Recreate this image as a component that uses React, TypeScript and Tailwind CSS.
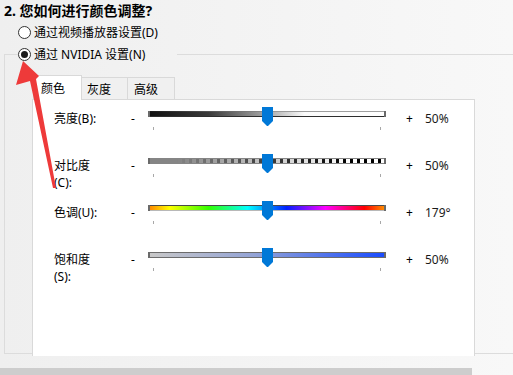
import React from "react";

type Kind = "bright" | "contrast" | "hue" | "sat";

function Track({ kind }: { kind: Kind }) {
  const id = `g-${kind}`;
  return (
    <svg width="238" height="24" viewBox="0 0 238 24" className="block">
      <defs>
        {kind === "bright" && (
          <>
            <linearGradient id={id} x1="0" x2="1" y1="0" y2="0">
              <stop offset="0" stopColor="#111" />
              <stop offset="0.25" stopColor="#3a3a3a" />
              <stop offset="0.5" stopColor="#a8a8a8" />
              <stop offset="0.66" stopColor="#fafafa" />
              <stop offset="1" stopColor="#ffffff" />
            </linearGradient>
            <linearGradient id={`${id}-t`} x1="0" x2="1" y1="0" y2="0">
              <stop offset="0" stopColor="#1a1a1a" />
              <stop offset="0.55" stopColor="#9a9a9a" />
              <stop offset="1" stopColor="#a0a0a0" />
            </linearGradient>
          </>
        )}
        {kind === "contrast" && (
          <>
            <pattern id={`${id}-p`} x="2" y="0" width="7" height="24" patternUnits="userSpaceOnUse">
              <rect x="0" y="0" width="4" height="24" fill="#ffffff" />
              <rect x="4" y="0" width="3" height="24" fill="#000000" />
            </pattern>
            <linearGradient id={`${id}-m`} x1="0" x2="1" y1="0" y2="0">
              <stop offset="0.12" stopColor="#fff" stopOpacity="0" />
              <stop offset="0.55" stopColor="#fff" stopOpacity="0.6" />
              <stop offset="0.85" stopColor="#fff" stopOpacity="1" />
            </linearGradient>
            <mask id={`${id}-mask`}>
              <rect x="0" y="0" width="238" height="24" fill={`url(#${id}-m)`} />
            </mask>
          </>
        )}
        {kind === "hue" && (
          <linearGradient id={id} x1="0" x2="1" y1="0" y2="0">
            <stop offset="0" stopColor="#ff8a00" />
            <stop offset="0.0833" stopColor="#ffff00" />
            <stop offset="0.25" stopColor="#33ff00" />
            <stop offset="0.4167" stopColor="#00ffff" />
            <stop offset="0.5833" stopColor="#0020ff" />
            <stop offset="0.75" stopColor="#ff00ff" />
            <stop offset="0.9167" stopColor="#ff0000" />
            <stop offset="1" stopColor="#ff8a00" />
          </linearGradient>
        )}
        {kind === "sat" && (
          <linearGradient id={id} x1="0" x2="1" y1="0" y2="0">
            <stop offset="0" stopColor="#c8c8c8" />
            <stop offset="0.45" stopColor="#93a3d6" />
            <stop offset="1" stopColor="#1a4cff" />
          </linearGradient>
        )}
      </defs>

      {kind === "bright" && (
        <>
          <rect x="2" y="4" width="234" height="6" fill={`url(#${id})`} />
          <rect x="2" y="4" width="234" height="1" fill={`url(#${id}-t)`} />
          <rect x="2" y="9" width="234" height="1" fill="#2e2e2e" />
        </>
      )}
      {kind === "contrast" && (
        <>
          <rect x="2" y="4" width="234" height="6" fill="#858585" />
          <rect x="2" y="5" width="234" height="4" fill={`url(#${id}-p)`} mask={`url(#${id}-mask)`} />
        </>
      )}
      {kind === "hue" && (
        <>
          <rect x="2" y="4" width="234" height="6" fill={`url(#${id})`} />
          <rect x="2" y="4" width="234" height="1" fill="#4a4a4a" />
          <rect x="2" y="9" width="234" height="1" fill="#b8b8b8" />
        </>
      )}
      {kind === "sat" && (
        <>
          <rect x="2" y="4" width="234" height="6" fill="#6c6c6c" />
          <rect x="2" y="5" width="234" height="4" fill={`url(#${id})`} />
        </>
      )}

      <rect x="0" y="4" width="2" height="6" fill="#6a6a6a" />
      <rect x="236" y="4" width="2" height="6" fill="#6a6a6a" />

      <rect x="5" y="20" width="1" height="3" fill="#a8a8a8" />
      <rect x="232" y="20" width="1" height="3" fill="#a8a8a8" />

      <polygon points="114,0 125,0 125,14 120,19 119,19 114,14" fill="#0078d7" />
    </svg>
  );
}

function Row({ lines, kind, value }: { lines: string[]; kind: Kind; value: string }) {
  return (
    <div className="flex h-[47px]">
      <div className="w-[77px] leading-[17px]">
        {lines.map((l) => (
          <div key={l}>{l}</div>
        ))}
      </div>
      <div className="w-[17px] leading-[17px]">-</div>
      <div className="w-[238px] -mt-[3px]">
        <Track kind={kind} />
      </div>
      <div className="ml-[20px] w-[19px] leading-[17px]">+</div>
      <div className="leading-[17px] text-[#1a1a1a]">{value}</div>
    </div>
  );
}

function Radio({ checked }: { checked?: boolean }) {
  return (
    <span className="flex items-center justify-center w-[13px] h-[13px] rounded-full border border-[#333333] bg-white shrink-0">
      {checked && <span className="w-[7px] h-[7px] rounded-full bg-[#1b1b1b]" />}
    </span>
  );
}

export default function App() {
  return (
    <div className="relative w-[513px] h-[375px] overflow-hidden bg-linear-to-r from-[#efefef] to-[#f8f8f8] text-[12px] text-black font-['Noto_Sans','Noto_Sans_CJK_SC',sans-serif]">
      <div className="pt-[1px] pl-[4px] h-[21px] leading-[20px] text-[14px] font-bold">
        2. 您如何进行颜色调整?
      </div>

      <div className="mt-[1px] h-[20px] pl-[18px] flex items-center gap-[3px] leading-[17px]">
        <Radio />
        <span>通过视频播放器设置(D)</span>
      </div>

      <fieldset className="mt-[2px] ml-[4px] w-[540px] border border-[#dcdcdc]">
        <legend className="ml-[13px] pr-[32px] h-[20px] flex items-center gap-[3px] leading-[17px]">
          <Radio checked />
          <span>通过 NVIDIA 设置(N)</span>
        </legend>

        <div className="mt-[11px] ml-[28px] flex items-end">
          <div className="relative z-10 -mb-px h-[25px] w-[49px] border border-b-0 border-[#d9d9d9] bg-white pt-[4px] pl-[7px] leading-[17px]">
            颜色
          </div>
          <div className="h-[22px] w-[46px] border border-l-0 border-b-0 border-[#d9d9d9] bg-[#f0f0f0] pt-[3px] pl-[5px] leading-[17px]">
            灰度
          </div>
          <div className="h-[22px] w-[47px] border border-l-0 border-b-0 border-[#d9d9d9] bg-[#f0f0f0] pt-[3px] pl-[6px] leading-[17px]">
            高级
          </div>
        </div>

        <div className="relative ml-[27px] w-[443px] h-[257px] -mb-[3px] border border-b-0 border-[#d9d9d9] bg-white pt-[10px] pl-[21px]">
          <Row lines={["亮度(B):"]} kind="bright" value="50%" />
          <Row lines={["对比度", "(C):"]} kind="contrast" value="50%" />
          <Row lines={["色调(U):"]} kind="hue" value="179°" />
          <Row lines={["饱和度", "(S):"]} kind="sat" value="50%" />
        </div>
      </fieldset>

      <div className="mt-[14px] h-[7px] flex">
        <div className="w-[472px] h-full bg-[#cdcdcd]" />
      </div>

      <svg
        className="absolute left-0 top-0 pointer-events-none z-20"
        width="80"
        height="200"
        viewBox="0 0 80 200"
      >
        <polygon
          points="23,61 16,85 30,81 53,188 56,188 36,79 39,76"
          fill="#ee3a3a"
        />
      </svg>
    </div>
  );
}
